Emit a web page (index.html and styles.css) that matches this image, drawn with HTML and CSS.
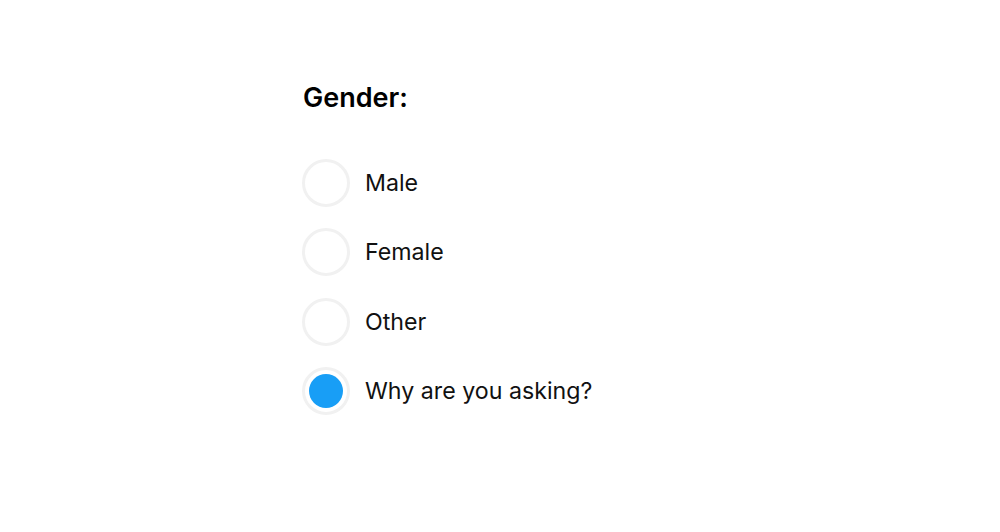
FILE: index.html
```html
<!DOCTYPE html>
<html>
<head>
<meta charset="utf-8">
<link rel="stylesheet" href="styles.css">
</head>
<body>
<div class="page">
  <form class="group">
    <div class="title">Gender:</div>
    <div class="options">
      <label class="option"><span class="radio"></span><span class="label">Male</span></label>
      <label class="option"><span class="radio"></span><span class="label">Female</span></label>
      <label class="option"><span class="radio"></span><span class="label">Other</span></label>
      <label class="option"><span class="radio checked"></span><span class="label">Why are you asking?</span></label>
    </div>
  </form>
</div>
</body>
</html>
```
FILE: styles.css
```css
html, body {
  margin: 0;
  padding: 0;
  background: #fff;
}
body {
  font-family: Inter, "Noto Sans", sans-serif;
  color: #111;
}
.page {
  width: 1000px;
  height: 532px;
  box-sizing: border-box;
  padding: 80px 0 0 302px;
}
.title {
  font-size: 27px;
  font-weight: 600;
  line-height: 36px;
  margin-left: 1px;
  color: #000;
}
.options {
  margin-top: 42.5px;
  display: flex;
  flex-direction: column;
  gap: 21.5px;
}
.option {
  display: flex;
  align-items: center;
  gap: 15px;
}
.radio {
  width: 48px;
  height: 48px;
  box-sizing: border-box;
  border: 3px solid #f1f1f1;
  border-radius: 50%;
  display: flex;
  align-items: center;
  justify-content: center;
}
.radio.checked::after {
  content: "";
  width: 34px;
  height: 34px;
  border-radius: 50%;
  background: #189ef6;
}
.label {
  font-size: 23.2px;
  color: #111;
}
```
